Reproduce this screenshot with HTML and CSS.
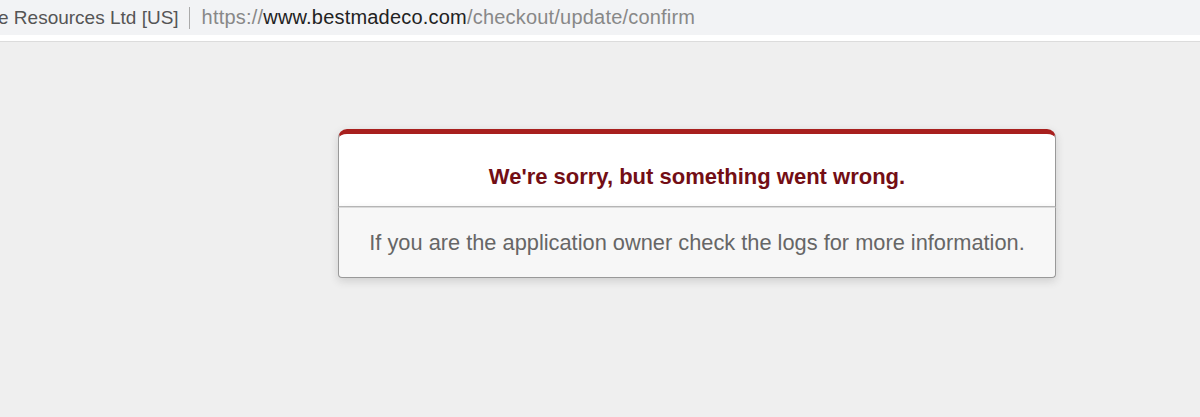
FILE: index.html
```html
<!DOCTYPE html>
<html lang="en">
<head>
    <meta charset="UTF-8">
    <meta name="viewport" content="width=device-width, initial-scale=1.0">
    <title>We're sorry, but something went wrong (500)</title>
    <link rel="stylesheet" href="styles.css">
</head>
<body>
    <div class="toolbar">
        <div class="address">
            <span class="cert">e Resources Ltd [US]</span>
            <span class="sep"></span>
            <span class="url"><span class="dim">https://</span>www.bestmadeco.com<span class="dim">/checkout/update/confirm</span></span>
        </div>
    </div>
    <div class="page">
        <div class="dialog">
            <div class="head">
                <h1>We're sorry, but something went wrong.</h1>
            </div>
            <p>If you are the application owner check the logs for more information.</p>
        </div>
    </div>
</body>
</html>
```

FILE: styles.css
```css
body {
    margin: 0;
    font-family: 'Liberation Sans', Arial, sans-serif;
    background-color: #efefef;
    height: 100vh;
    overflow: hidden;
}

.toolbar {
    background-color: #f2f3f5;
    height: 35px;
    border-bottom: 6px solid #fff;
    box-shadow: 0 1px 0 #dcdcdc;
}

.address {
    display: flex;
    align-items: center;
    height: 35px;
    font-size: 19px;
    color: #222;
    white-space: nowrap;
}

.cert {
    color: #555;
    margin-left: -2px;
}

.sep {
    width: 1px;
    height: 22px;
    background-color: #aaa;
    margin: 0 12px 0 10px;
}

.url {
    font-size: 20px;
    letter-spacing: 0.2px;
}

.dim {
    color: #888;
}

.page {
    padding: 88px 0 0 338px;
}

.dialog {
    width: 718px;
}

.head {
    background-color: #fff;
    border: 1px solid #ccc;
    border-left-color: #999;
    border-right-color: #999;
    border-bottom-color: #bbb;
    border-top: 5px solid #a8201e;
    border-top-left-radius: 9px;
    border-top-right-radius: 9px;
    box-shadow: 0 3px 8px rgba(50, 50, 50, 0.17);
    height: 72px;
    display: flex;
    align-items: center;
    justify-content: center;
}

h1 {
    margin: 0;
    padding-top: 13px;
    font-size: 22px;
    color: #730e15;
}

.dialog p {
    margin: 0;
    height: 71px;
    padding-top: 1px;
    box-sizing: border-box;
    display: flex;
    align-items: center;
    justify-content: center;
    background-color: #f7f7f7;
    border: 1px solid #999;
    border-top: 1px solid #dadada;
    border-bottom-left-radius: 4px;
    border-bottom-right-radius: 4px;
    box-shadow: 0 3px 8px rgba(50, 50, 50, 0.17);
    font-size: 21.8px;
    color: #666;
}
```
